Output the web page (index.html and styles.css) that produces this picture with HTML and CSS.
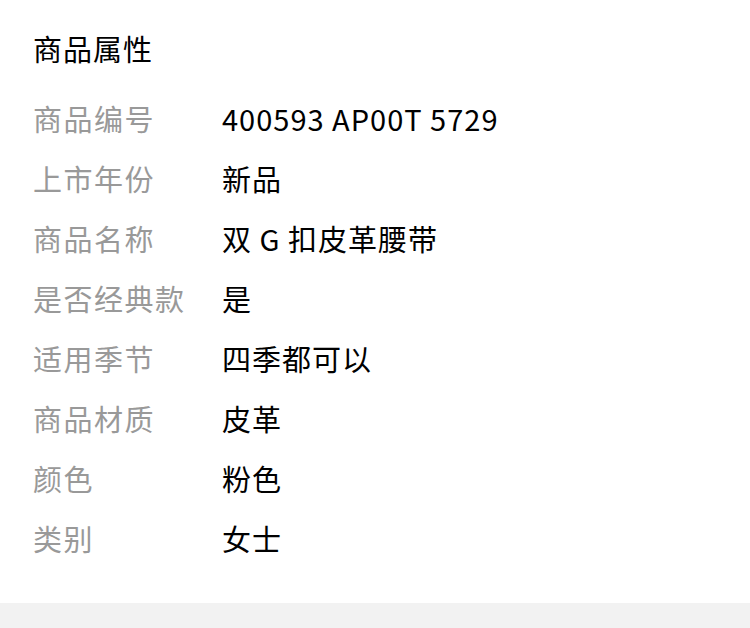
FILE: index.html
```html
<!DOCTYPE html>
<html lang="zh-CN">
<head>
    <meta charset="UTF-8">
    <meta name="viewport" content="width=device-width, initial-scale=1.0">
    <title>商品属性</title>
    <link rel="stylesheet" href="styles.css">
</head>
<body>
    <section class="attr-panel">
        <h2 class="attr-title">商品属性</h2>
        <dl class="attr-list">
            <div class="attr-row">
                <dt>商品编号</dt>
                <dd>400593 AP00T 5729</dd>
            </div>
            <div class="attr-row">
                <dt>上市年份</dt>
                <dd>新品</dd>
            </div>
            <div class="attr-row">
                <dt>商品名称</dt>
                <dd>双 G 扣皮革腰带</dd>
            </div>
            <div class="attr-row">
                <dt>是否经典款</dt>
                <dd>是</dd>
            </div>
            <div class="attr-row">
                <dt>适用季节</dt>
                <dd>四季都可以</dd>
            </div>
            <div class="attr-row">
                <dt>商品材质</dt>
                <dd>皮革</dd>
            </div>
            <div class="attr-row">
                <dt>颜色</dt>
                <dd>粉色</dd>
            </div>
            <div class="attr-row">
                <dt>类别</dt>
                <dd>女士</dd>
            </div>
        </dl>
    </section>
    <div class="page-gap"></div>
</body>
</html>
```

FILE: styles.css
```css
* {
    margin: 0;
    padding: 0;
    box-sizing: border-box;
}

body {
    font-family: "Noto Sans CJK SC", "Noto Sans", sans-serif;
    background: #ffffff;
    color: #000000;
}

.attr-panel {
    padding: 28px 33px 35px;
}

.attr-title {
    font-size: 29px;
    font-weight: 400;
    line-height: 40px;
    letter-spacing: 1px;
    margin-bottom: 20px;
}

.attr-row {
    display: grid;
    grid-template-columns: 189px 1fr;
    align-items: center;
    height: 60px;
    font-size: 29px;
    letter-spacing: 1px;
}

.attr-row dt {
    color: #999999;
    letter-spacing: 1.5px;
}

.attr-row dd {
    color: #000000;
}

.page-gap {
    height: 40px;
    background: #f2f2f2;
}
```
